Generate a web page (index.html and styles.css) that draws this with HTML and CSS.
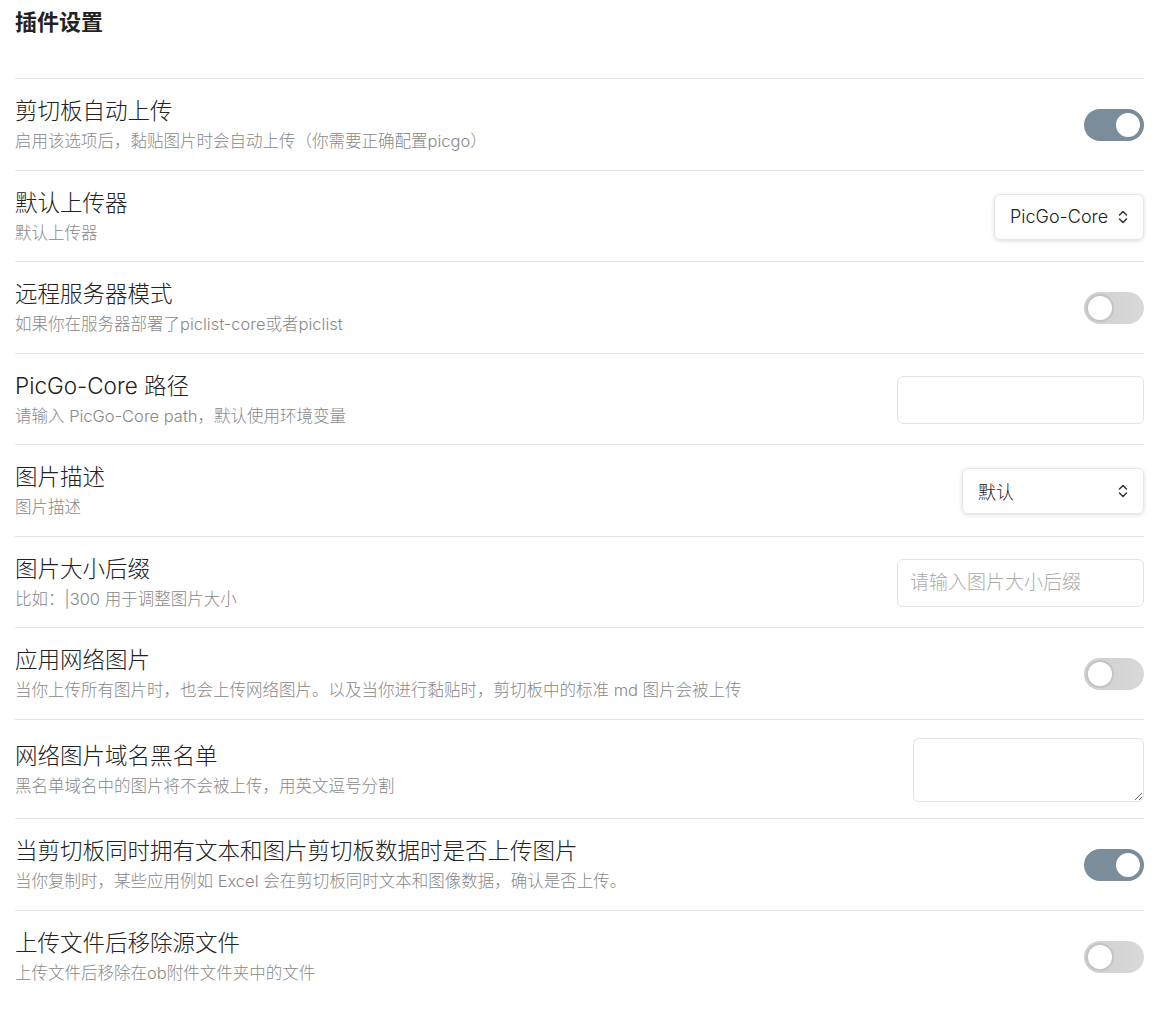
FILE: index.html
```html
<!DOCTYPE html>
<html lang="zh-CN">
<head>
  <meta charset="UTF-8">
  <title>插件设置</title>
  <link rel="stylesheet" href="styles.css">
</head>
<body>
  <div class="settings">
    <h2 class="settings-title">插件设置</h2>

    <div class="setting-item">
      <div class="setting-info">
        <div class="setting-name">剪切板自动上传</div>
        <div class="setting-desc">启用该选项后，黏贴图片时会自动上传（你需要正确配置picgo）</div>
      </div>
      <div class="toggle on"><span class="knob"></span></div>
    </div>

    <div class="setting-item">
      <div class="setting-info">
        <div class="setting-name">默认上传器</div>
        <div class="setting-desc">默认上传器</div>
      </div>
      <div class="dropdown uploader">
        <span>PicGo-Core</span>
        <svg class="chevrons" viewBox="0 0 12 16" width="12" height="16"><path d="M2.5 6 L6 2.5 L9.5 6 M2.5 10 L6 13.5 L9.5 10" fill="none" stroke="#333" stroke-width="1.5" stroke-linecap="round" stroke-linejoin="round"/></svg>
      </div>
    </div>

    <div class="setting-item">
      <div class="setting-info">
        <div class="setting-name">远程服务器模式</div>
        <div class="setting-desc">如果你在服务器部署了piclist-core或者piclist</div>
      </div>
      <div class="toggle"><span class="knob"></span></div>
    </div>

    <div class="setting-item">
      <div class="setting-info">
        <div class="setting-name">PicGo-Core 路径</div>
        <div class="setting-desc">请输入 PicGo-Core path，默认使用环境变量</div>
      </div>
      <input class="text-input" type="text">
    </div>

    <div class="setting-item">
      <div class="setting-info">
        <div class="setting-name">图片描述</div>
        <div class="setting-desc">图片描述</div>
      </div>
      <div class="dropdown desc-mode">
        <span>默认</span>
        <svg class="chevrons" viewBox="0 0 12 16" width="12" height="16"><path d="M2.5 6 L6 2.5 L9.5 6 M2.5 10 L6 13.5 L9.5 10" fill="none" stroke="#333" stroke-width="1.5" stroke-linecap="round" stroke-linejoin="round"/></svg>
      </div>
    </div>

    <div class="setting-item">
      <div class="setting-info">
        <div class="setting-name">图片大小后缀</div>
        <div class="setting-desc">比如：|300 用于调整图片大小</div>
      </div>
      <input class="text-input" type="text" placeholder="请输入图片大小后缀">
    </div>

    <div class="setting-item">
      <div class="setting-info">
        <div class="setting-name">应用网络图片</div>
        <div class="setting-desc">当你上传所有图片时，也会上传网络图片。以及当你进行黏贴时，剪切板中的标准 md 图片会被上传</div>
      </div>
      <div class="toggle"><span class="knob"></span></div>
    </div>

    <div class="setting-item">
      <div class="setting-info">
        <div class="setting-name">网络图片域名黑名单</div>
        <div class="setting-desc">黑名单域名中的图片将不会被上传，用英文逗号分割</div>
      </div>
      <textarea class="text-area"></textarea>
    </div>

    <div class="setting-item">
      <div class="setting-info">
        <div class="setting-name">当剪切板同时拥有文本和图片剪切板数据时是否上传图片</div>
        <div class="setting-desc">当你复制时，某些应用例如 Excel 会在剪切板同时文本和图像数据，确认是否上传。</div>
      </div>
      <div class="toggle on"><span class="knob"></span></div>
    </div>

    <div class="setting-item">
      <div class="setting-info">
        <div class="setting-name">上传文件后移除源文件</div>
        <div class="setting-desc">上传文件后移除在ob附件文件夹中的文件</div>
      </div>
      <div class="toggle"><span class="knob"></span></div>
    </div>
  </div>
</body>
</html>
```

FILE: styles.css
```css
body {
  margin: 0;
  background: #fff;
  color: #222;
  font-family: "Inter", "Noto Sans CJK SC", sans-serif;
}
.settings { padding: 0 30px 0 15px; }
.settings-title {
  margin: 0;
  padding: 8px 0 0;
  height: 70px;
  font-size: 22px;
  line-height: 28px;
  font-weight: 700;
}
.setting-item {
  display: flex;
  align-items: center;
  gap: 20px;
  padding: 18px 0 16.5px;
  border-top: 1px solid #e4e4e4;
}
.setting-info { flex: 1; min-width: 0; }
.setting-name { font-size: 22.5px; line-height: 27px; font-weight: 300; color: #222; }
.setting-desc { margin-top: 5px; font-size: 16.5px; line-height: 24px; font-weight: 300; color: #888; }

.toggle {
  position: relative;
  width: 60px;
  height: 32px;
  border-radius: 16px;
  background: linear-gradient(90deg, #cfcfcf, #d9d9d9);
  flex-shrink: 0;
}
.toggle .knob {
  position: absolute;
  top: 2px;
  left: 2px;
  width: 24px;
  height: 24px;
  border-radius: 50%;
  background: #fff;
  border: 2px solid #c4c4c4;
}
.toggle.on { background: #7b8c9a; }
.toggle.on .knob { left: auto; right: 2px; border-color: #7b8c9a; }

.dropdown {
  display: flex;
  align-items: center;
  justify-content: space-between;
  box-sizing: border-box;
  height: 46px;
  padding: 0 14px 0 15px;
  border: 1px solid #e6e6e6;
  border-radius: 6px;
  box-shadow: 0 1px 4px rgba(0, 0, 0, 0.14);
  font-size: 18px;
  font-weight: 300;
  color: #222;
  flex-shrink: 0;
}
.dropdown.uploader { width: 150px; }
.dropdown.desc-mode { width: 182px; }

.text-input, .text-area {
  box-sizing: border-box;
  border: 1px solid #e3e3e3;
  border-radius: 6px;
  background: #fff;
  font-family: inherit;
  font-size: 19px;
  font-weight: 300;
  color: #222;
  flex-shrink: 0;
}
.text-input { width: 247px; height: 48px; padding: 0 12px; }
.text-input::placeholder { color: #ababab; }
.text-area { width: 231px; height: 64px; }
```
